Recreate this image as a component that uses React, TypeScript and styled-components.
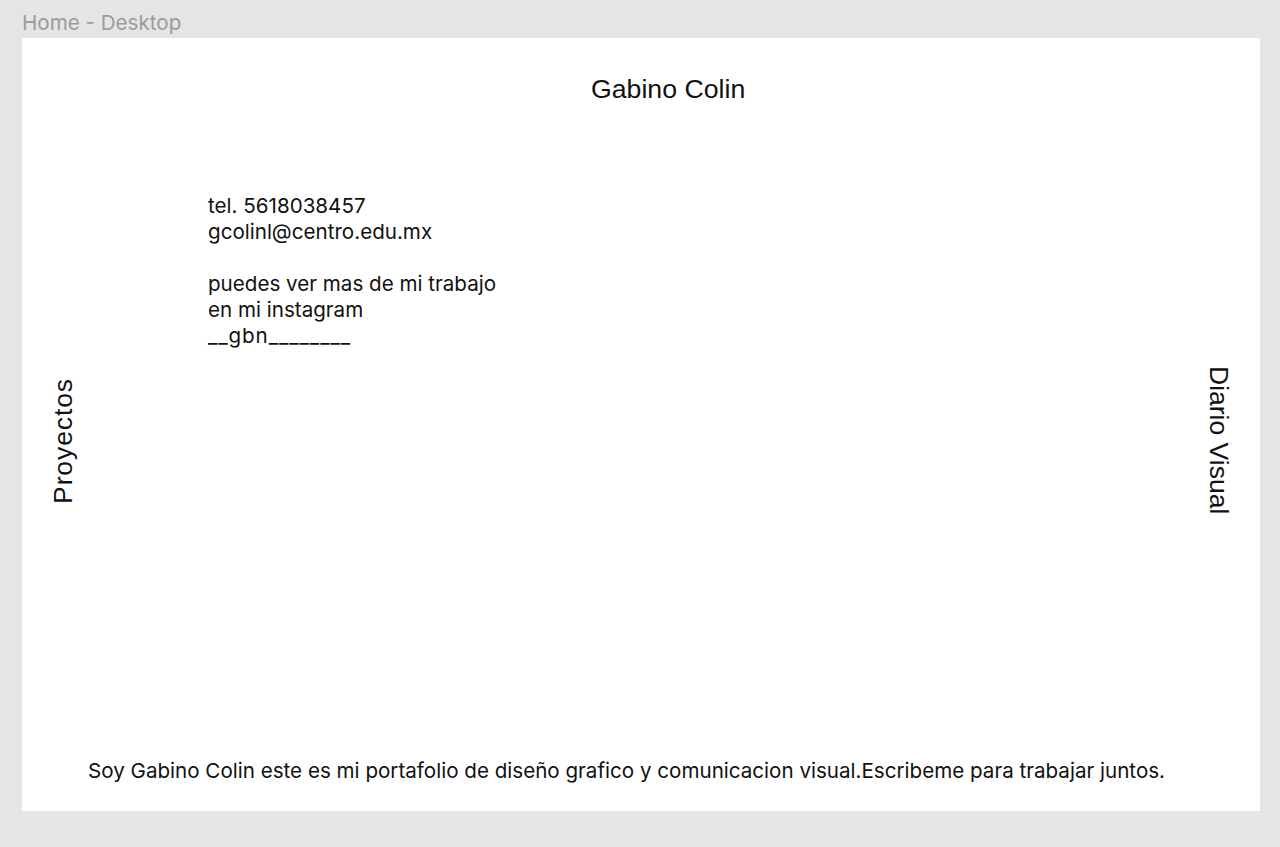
import React from "react";
import styled, { createGlobalStyle } from "styled-components";

const Global = createGlobalStyle`
  html, body { margin: 0; padding: 0; background: #e5e5e5; }
  body { font-family: "Liberation Sans", Arial, sans-serif; }
`;

const Canvas = styled.div`
  width: 1280px;
  height: 847px;
  padding: 9px 0 0 22px;
  box-sizing: border-box;
  background: #e5e5e5;
`;

const FrameLabel = styled.div`
  font-family: Inter, "Noto Sans", sans-serif;
  font-size: 20.6px;
  line-height: 28px;
  color: #9b9b9b;
  height: 29px;
`;

const Frame = styled.main`
  width: 1238px;
  height: 773px;
  background: #ffffff;
  display: grid;
  grid-template-columns: 82px 1fr 82px;
  grid-template-rows: auto 1fr auto;
  color: #111111;
`;

const Title = styled.h1`
  grid-column: 1 / -1;
  margin: 0;
  padding: 37px 0 0 569px;
  font-family: "Liberation Sans", Arial, sans-serif;
  font-weight: 400;
  font-size: 26.7px;
  line-height: 28px;
`;

const SideLabel = styled.div<{ $dir: "up" | "down"; $spacing: number }>`
  display: flex;
  align-items: center;
  justify-content: center;
  padding-top: 20px;
  span {
    font-family: "Liberation Sans", Arial, sans-serif;
    font-size: 26.5px;
    letter-spacing: ${(p) => p.$spacing}px;
    line-height: 28px;
    writing-mode: vertical-rl;
    transform: ${(p) => (p.$dir === "up" ? "rotate(180deg)" : "none")};
    white-space: nowrap;
  }
`;

const Contact = styled.div`
  padding: 90px 0 0 104px;
  font-family: Inter, "Noto Sans", sans-serif;
  font-size: 20.6px;
  line-height: 26px;
  p {
    margin: 0 0 26px;
  }
`;

const Handle = styled.span`
  letter-spacing: 0.9px;
`;

const Footer = styled.footer`
  grid-column: 1 / -1;
  padding: 0 0 27px 66px;
  font-family: Inter, "Noto Sans", sans-serif;
  font-size: 20.6px;
  line-height: 26px;
  white-space: nowrap;
`;

export default function App() {
  return (
    <>
      <Global />
      <Canvas>
        <FrameLabel>Home - Desktop</FrameLabel>
        <Frame>
          <Title>Gabino Colin</Title>
          <SideLabel $dir="up" $spacing={0.9}>
            <span>Proyectos</span>
          </SideLabel>
          <Contact>
            <p>
              tel. 5618038457
              <br />
              gcolinl@centro.edu.mx
            </p>
            <p>
              puedes ver mas de mi trabajo
              <br />
              en mi instagram
              <br />
              <Handle>__gbn________</Handle>
            </p>
          </Contact>
          <SideLabel $dir="down" $spacing={0}>
            <span>Diario Visual</span>
          </SideLabel>
          <Footer>
            Soy Gabino Colin este es mi portafolio de diseño grafico y comunicacion visual.Escribeme para trabajar juntos.
          </Footer>
        </Frame>
      </Canvas>
    </>
  );
}
